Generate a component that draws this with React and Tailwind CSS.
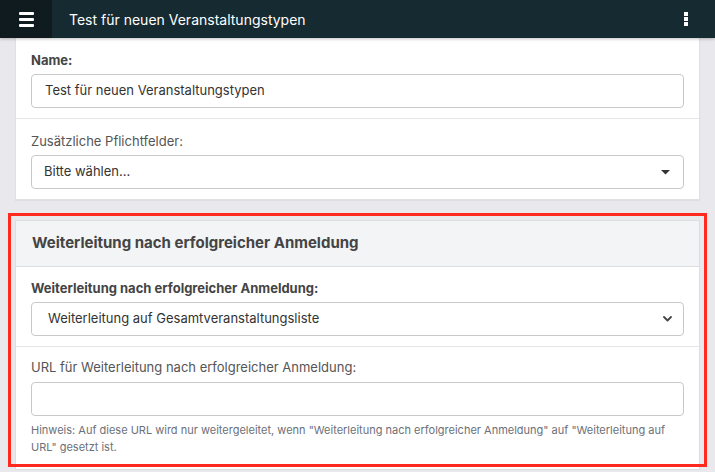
import React from "react";

function Caret() {
  return (
    <svg width="9" height="5" viewBox="0 0 9 5" className="block">
      <path d="M0 0 L9 0 L4.5 4.5 Z" fill="#333" />
    </svg>
  );
}

function Chevron() {
  return (
    <svg width="9" height="6" viewBox="0 0 9 6" className="block">
      <path d="M1 1 L4.5 4.5 L8 1" fill="none" stroke="#444" strokeWidth="1.8" strokeLinecap="round" strokeLinejoin="round" />
    </svg>
  );
}

export default function App() {
  return (
    <div className="relative h-[472px] w-[715px] overflow-hidden bg-[#e9e9ed] font-['Inter',sans-serif] text-[13px] text-[#444]">
      {/* header */}
      <div className="relative z-10 flex h-[38px] items-center bg-[#152a31] shadow-[0_1px_3px_rgba(0,0,0,0.25)]">
        <div className="flex h-full w-[52px] flex-col items-center justify-center gap-[3px] bg-[#0f1b1f]">
          <span className="block h-[3px] w-[15px] rounded-[1px] bg-white" />
          <span className="block h-[3px] w-[15px] rounded-[1px] bg-white" />
          <span className="block h-[3px] w-[15px] rounded-[1px] bg-white" />
        </div>
        <div className="ml-[17px] flex-1 text-[14px] text-white">Test für neuen Veranstaltungstypen</div>
        <div className="mr-[27px] flex flex-col items-center gap-[1px]">
          <span className="block h-[4px] w-[4px] bg-white" />
          <span className="block h-[4px] w-[4px] bg-white" />
          <span className="block h-[4px] w-[4px] bg-white" />
        </div>
      </div>

      <div className="px-[15px]">
        {/* card 1 */}
        <div className="border-x border-b border-[#dfe0e3] bg-white shadow-[0_1px_1px_rgba(0,0,0,0.04)]">
          <div className="border-b border-[#e6e6e6] px-[15px] pt-[12px] pb-[10px]">
            <div className="mb-[4px] h-[20px] font-bold leading-[20px]">Name:</div>
            <div className="flex h-[34px] items-center rounded-[4px] border border-[#c9c9c9] px-[13px] text-[13px] text-[#333]">
              Test für neuen Veranstaltungstypen
            </div>
          </div>
          <div className="px-[15px] pt-[12px] pb-[10px]">
            <div className="mb-[4px] h-[20px] leading-[20px] text-[#555]">Zusätzliche Pflichtfelder:</div>
            <div className="flex h-[34px] items-center justify-between rounded-[4px] border border-[#c9c9c9] pl-[12px] pr-[13px] text-[#333]">
              <span>Bitte wählen...</span>
              <Caret />
            </div>
          </div>
        </div>

        {/* card 2 */}
        <div className="relative mt-[20px]">
          <div className="h-[250px] border border-[#dcdde0] bg-white">
            <div className="flex h-[46px] items-center border-b border-[#dcdde0] bg-[#f3f4f6] px-[16px] text-[15px] font-bold text-[#444]">
              Weiterleitung nach erfolgreicher Anmeldung
            </div>
            <div className="border-b border-[#e6e6e6] px-[15px] pt-[11px] pb-[10px]">
              <div className="mb-[4px] h-[20px] font-bold leading-[20px]">Weiterleitung nach erfolgreicher Anmeldung:</div>
              <div className="flex h-[34px] items-center justify-between rounded-[4px] border border-[#c9c9c9] pl-[16px] pr-[11px] text-[#333]">
                <span>Weiterleitung auf Gesamtveranstaltungsliste</span>
                <Chevron />
              </div>
            </div>
            <div className="px-[15px] pt-[10px]">
              <div className="mb-[5px] h-[20px] leading-[20px] text-[#555]">URL für Weiterleitung nach erfolgreicher Anmeldung:</div>
              <div className="h-[34px] rounded-[4px] border border-[#c9c9c9]" />
              <div className="mt-[6px] text-[11px] leading-[17px] text-[#6c7079]">
                Hinweis: Auf diese URL wird nur weitergeleitet, wenn "Weiterleitung nach erfolgreicher Anmeldung" auf "Weiterleitung auf URL" gesetzt ist.
              </div>
            </div>
          </div>
          <div className="pointer-events-none absolute left-[-7px] right-[-7px] top-[-7px] h-[254px] border-[3px] border-[#ff2a1f]" />
        </div>
      </div>
    </div>
  );
}
